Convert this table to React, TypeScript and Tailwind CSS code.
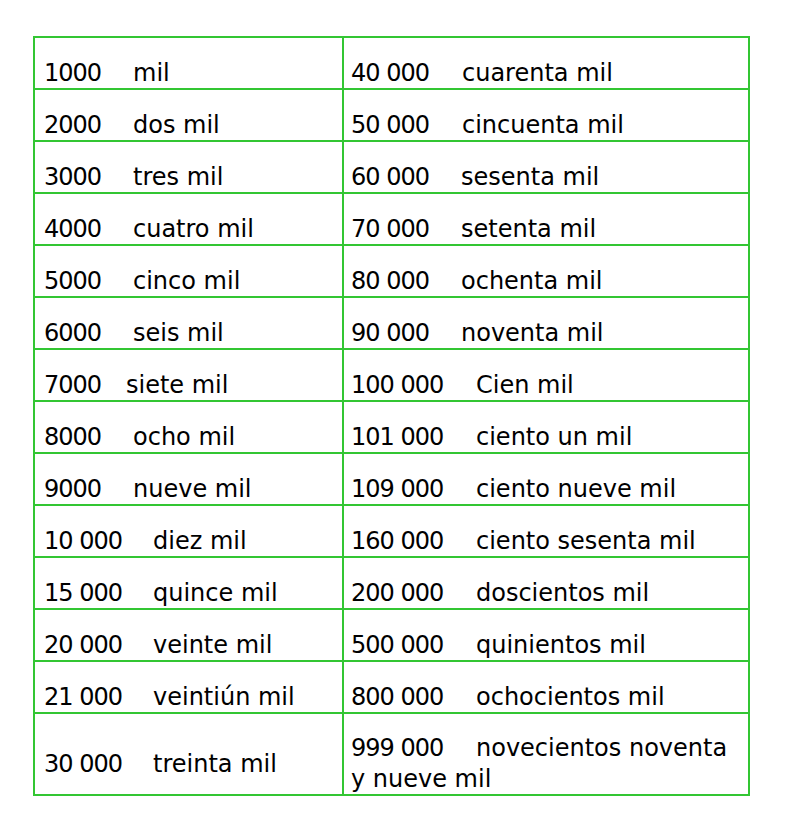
const LEFT: [string, string, number][] = [
  ['1000', 'mil', 89],
  ['2000', 'dos mil', 89],
  ['3000', 'tres mil', 89],
  ['4000', 'cuatro mil', 89],
  ['5000', 'cinco mil', 89],
  ['6000', 'seis mil', 89],
  ['7000', 'siete mil', 82],
  ['8000', 'ocho mil', 89],
  ['9000', 'nueve mil', 89],
  ['10 000', 'diez mil', 109],
  ['15 000', 'quince mil', 109],
  ['20 000', 'veinte mil', 109],
  ['21 000', 'veintiún mil', 109],
];

const RIGHT: [string, string, number][] = [
  ['40 000', 'cuarenta mil', 111],
  ['50 000', 'cincuenta mil', 111],
  ['60 000', 'sesenta mil', 110],
  ['70 000', 'setenta mil', 110],
  ['80 000', 'ochenta mil', 110],
  ['90 000', 'noventa mil', 110],
  ['100 000', 'Cien mil', 125],
  ['101 000', 'ciento un mil', 125],
  ['109 000', 'ciento nueve mil', 125],
  ['160 000', 'ciento sesenta mil', 125],
  ['200 000', 'doscientos mil', 125],
  ['500 000', 'quinientos mil', 125],
  ['800 000', 'ochocientos mil', 125],
];

// widths are literal classes so tailwind picks them up
const W: Record<number, string> = {
  82: 'w-[82px]',
  89: 'w-[89px]',
  109: 'w-[109px]',
  110: 'w-[110px]',
  111: 'w-[111px]',
  125: 'w-[125px]',
};

function Entry({ num, word, w }: { num: string; word: string; w: number }) {
  return (
    <div className="flex whitespace-nowrap">
      <span className={`${W[w]} shrink-0 tracking-[-1px]`}>{num}</span>
      <span>{word}</span>
    </div>
  );
}

export default function App() {
  return (
    <div className="min-h-[827px] bg-white pt-[36px] pl-[33px] font-['DejaVu_Sans',sans-serif] text-[24px] leading-[30px] text-black">
      <div className="grid w-[717px] grid-cols-[309px_406px] border-l-2 border-t-2 border-[#33c633]">
        {LEFT.map((l, i) => {
          const r = RIGHT[i];
          return (
            <div key={l[0]} className="contents">
              <div className="h-[52px] border-b-2 border-r-2 border-[#33c633] pl-[9px] pt-[21px] leading-[29px]">
                <Entry num={l[0]} word={l[1]} w={l[2]} />
              </div>
              <div className="h-[52px] border-b-2 border-r-2 border-[#33c633] pl-[7px] pt-[21px] leading-[29px]">
                <Entry num={r[0]} word={r[1]} w={r[2]} />
              </div>
            </div>
          );
        })}
        <div className="flex h-[82px] items-center border-b-2 border-r-2 border-[#33c633] pl-[9px] pt-[20px]">
          <Entry num="30 000" word="treinta mil" w={109} />
        </div>
        <div className="h-[82px] whitespace-nowrap border-b-2 border-r-2 border-[#33c633] pl-[7px] pt-[19px] leading-[31px]">
          <span className="inline-block w-[125px] tracking-[-1px]">999 000</span>
          novecientos noventa
          <br />
          y nueve mil
        </div>
      </div>
    </div>
  );
}
